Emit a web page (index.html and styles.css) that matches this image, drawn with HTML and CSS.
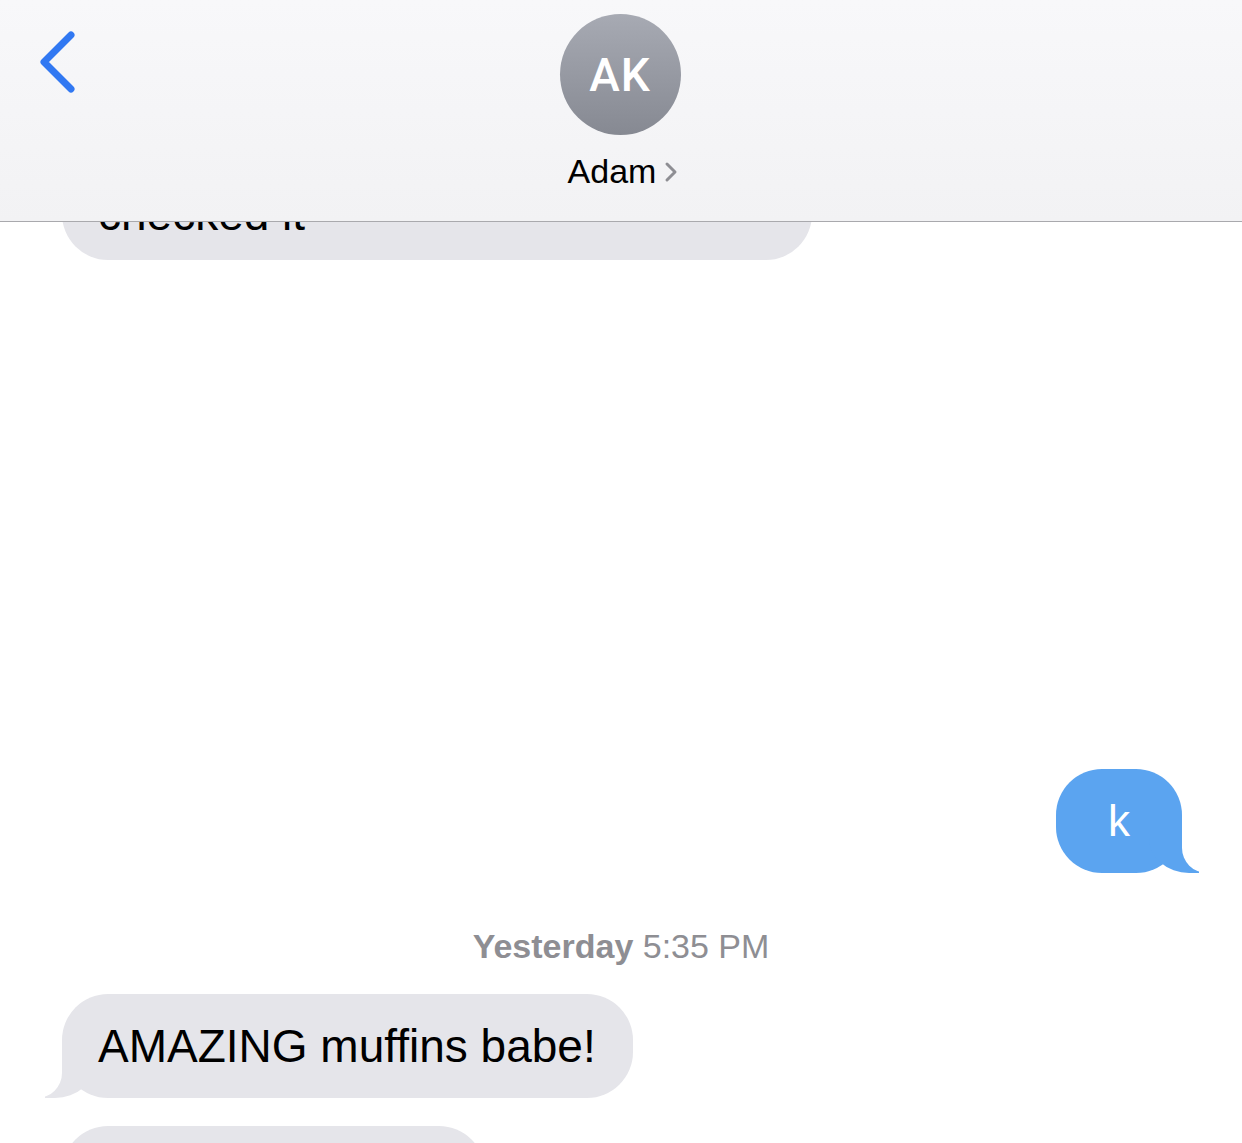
FILE: index.html
```html
<!DOCTYPE html>
<html lang="en">
<head>
    <meta charset="UTF-8">
    <meta name="viewport" content="width=device-width, initial-scale=1.0">
    <title>Messages - Adam</title>
    <link rel="stylesheet" href="styles.css">
</head>
<body>
<div class="screen">
    <!-- Barra superior con el contacto -->
    <header class="nav">
        <div class="nav-left">
            <svg class="back" width="44" height="70" viewBox="0 0 44 70">
                <polyline points="33,6 6,33 33,60" fill="none" stroke="#3178f2" stroke-width="7" stroke-linecap="round" stroke-linejoin="round"/>
            </svg>
        </div>
        <div class="contact">
            <div class="avatar">AK</div>
            <div class="name">Adam
                <svg class="name-chevron" width="14" height="24" viewBox="0 0 14 24">
                    <polyline points="3,4 11,12 3,20" fill="none" stroke="#8e8e93" stroke-width="3" stroke-linecap="round" stroke-linejoin="round"/>
                </svg>
            </div>
        </div>
        <div></div>
    </header>

    <div class="thread">
        <div class="row them first">
            <div class="bubble gray wide">checked it</div>
        </div>

        <div class="row me gap-big">
            <div class="bubble blue">k</div>
        </div>

        <div class="timestamp"><b>Yesterday</b> 5:35 PM</div>

        <div class="row them">
            <div class="bubble gray">AMAZING muffins babe!</div>
        </div>

        <div class="row them">
            <div class="bubble gray">Thanks so much!</div>
        </div>
    </div>
</div>
</body>
</html>
```

FILE: styles.css
```css
body {
    margin: 0;
    background-color: #ffffff;
    font-family: 'Liberation Sans', Arial, sans-serif;
    color: #000000;
}

.screen {
    position: relative;
    width: 1242px;
    height: 1143px;
    overflow: hidden;
}

/* Barra de navegacion */
.nav {
    position: absolute;
    top: 0;
    left: 0;
    right: 0;
    height: 221px;
    z-index: 5;
    display: grid;
    grid-template-columns: 1fr auto 1fr;
    background: linear-gradient(to bottom, #f8f8fa, #f2f2f4);
    border-bottom: 1px solid #a9a9ad;
}

.nav-left {
    padding-top: 29px;
    padding-left: 38px;
}

.back {
    display: block;
}

.contact {
    display: flex;
    flex-direction: column;
    align-items: center;
    padding-top: 14px;
}

.avatar {
    width: 121px;
    height: 121px;
    border-radius: 50%;
    background: linear-gradient(to bottom, #a7aab3, #868992);
    color: #ffffff;
    font-family: 'Roboto', 'Liberation Sans', sans-serif;
    font-weight: 500;
    font-size: 46px;
    display: flex;
    align-items: center;
    justify-content: center;
    letter-spacing: 1px;
    margin-left: -2px;
}

.name {
    margin-top: 16px;
    font-size: 34px;
    line-height: 40px;
    display: flex;
    align-items: center;
    gap: 8px;
    padding-left: 4px;
}

.name-chevron {
    margin-top: 2px;
}

/* Conversacion */
.thread {
    padding-top: 156px;
}

.row {
    display: flex;
    padding: 0 60px 0 62px;
}

.row.them {
    justify-content: flex-start;
    margin-top: 28px;
}

.row.them.first {
    margin-top: 0;
}

.row.me {
    justify-content: flex-end;
}

.gap-big {
    margin-top: 509px;
}

.bubble {
    position: relative;
    z-index: 0;
    padding: 24px 37px 24px 36px;
    font-size: 46px;
    line-height: 56px;
    border-radius: 46px;
    white-space: nowrap;
}

.bubble.wide {
    width: 677px;
    padding-top: 30px;
    padding-bottom: 18px;
}

.bubble.gray {
    background-color: #e5e5ea;
}

.bubble.blue {
    background-color: #5ba4f0;
    color: #ffffff;
    padding: 24px 52px;
    font-size: 44px;
}

/* Colita de la burbuja */
.bubble::before,
.bubble::after {
    content: "";
    position: absolute;
    bottom: 0;
    height: 50px;
    z-index: -1;
}

.bubble.gray::before {
    left: -17px;
    width: 50px;
    background-color: #e5e5ea;
    border-bottom-right-radius: 40px 35px;
}

.bubble.gray::after {
    left: -65px;
    width: 65px;
    background-color: #ffffff;
    border-bottom-right-radius: 25px;
}

.bubble.blue::before {
    right: -17px;
    width: 50px;
    background-color: #5ba4f0;
    border-bottom-left-radius: 40px 35px;
}

.bubble.blue::after {
    right: -65px;
    width: 65px;
    background-color: #ffffff;
    border-bottom-left-radius: 25px;
}

.row.first .bubble::before,
.row.first .bubble::after {
    display: none;
}

.timestamp {
    margin-top: 53px;
    text-align: center;
    font-size: 34px;
    line-height: 40px;
    color: #8e8e93;
}

.timestamp b {
    font-weight: bold;
}
```
